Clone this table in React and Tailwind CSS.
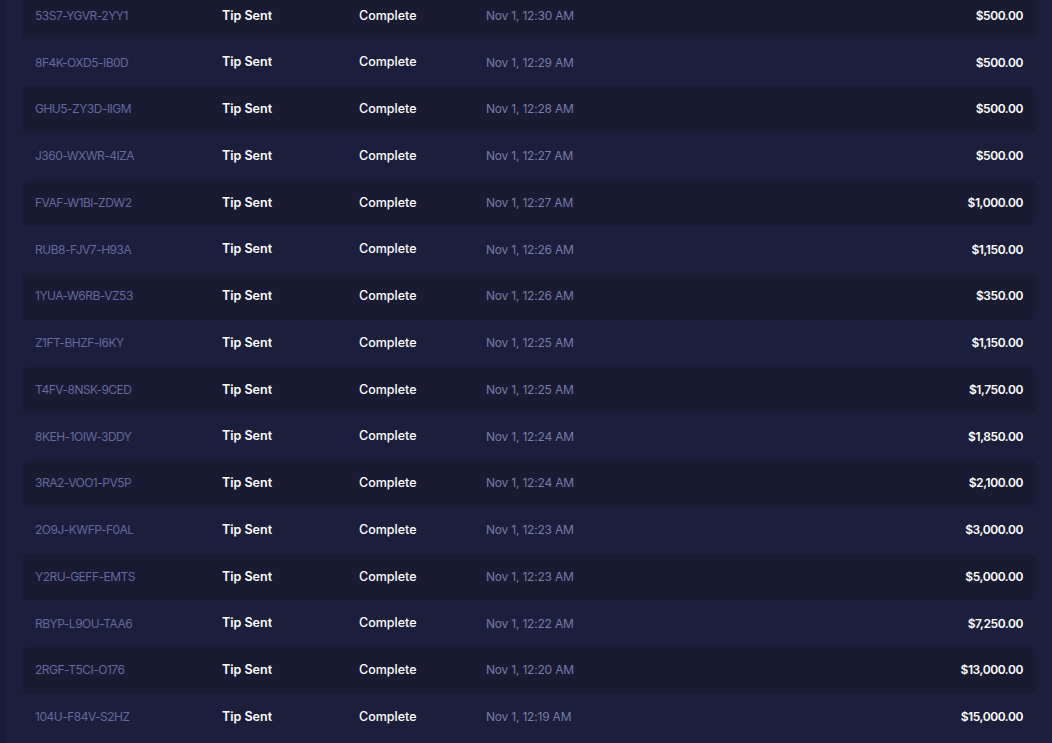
import React from "react";

const rows = [
  ["53S7-YGVR-2YY1", "Nov 1, 12:30 AM", "$500.00"],
  ["8F4K-OXD5-IB0D", "Nov 1, 12:29 AM", "$500.00"],
  ["GHU5-ZY3D-IIGM", "Nov 1, 12:28 AM", "$500.00"],
  ["J360-WXWR-4IZA", "Nov 1, 12:27 AM", "$500.00"],
  ["FVAF-W1BI-ZDW2", "Nov 1, 12:27 AM", "$1,000.00"],
  ["RUB8-FJV7-H93A", "Nov 1, 12:26 AM", "$1,150.00"],
  ["1YUA-W6RB-VZ53", "Nov 1, 12:26 AM", "$350.00"],
  ["Z1FT-BHZF-I6KY", "Nov 1, 12:25 AM", "$1,150.00"],
  ["T4FV-8NSK-9CED", "Nov 1, 12:25 AM", "$1,750.00"],
  ["8KEH-1OIW-3DDY", "Nov 1, 12:24 AM", "$1,850.00"],
  ["3RA2-VOO1-PV5P", "Nov 1, 12:24 AM", "$2,100.00"],
  ["2O9J-KWFP-F0AL", "Nov 1, 12:23 AM", "$3,000.00"],
  ["Y2RU-GEFF-EMTS", "Nov 1, 12:23 AM", "$5,000.00"],
  ["RBYP-L9OU-TAA6", "Nov 1, 12:22 AM", "$7,250.00"],
  ["2RGF-T5CI-O176", "Nov 1, 12:20 AM", "$13,000.00"],
  ["104U-F84V-S2HZ", "Nov 1, 12:19 AM", "$15,000.00"],
];

export default function App() {
  return (
    <div
      className="flex h-[743px] w-[1052px] overflow-hidden bg-[#1b1f3b]"
      style={{ fontFamily: "Inter, 'Noto Sans', sans-serif" }}
    >
      <div className="w-[7px] shrink-0 bg-[#171b34]" />
      <div className="flex-1 overflow-hidden pl-[15px] pr-[16px]">
        <div className="-mt-[7.5px] flex flex-col">
          {rows.map(([id, date, amt], i) => (
            <div
              key={id}
              className={
                "flex h-[46.75px] shrink-0 items-center rounded-md pl-[13px] pr-[13px] text-[12.5px] " +
                (i % 2 === 0 ? "bg-[#181b32]" : "bg-transparent")
              }
            >
              <div className="w-[187px] shrink-0 text-[12px] tracking-[-0.5px] text-[#646a9d]">{id}</div>
              <div className="w-[137px] shrink-0 font-semibold text-white">Tip Sent</div>
              <div className="w-[127px] shrink-0 font-medium text-white">Complete</div>
              <div className="w-[110px] shrink-0 text-[12px] tracking-[-0.2px] text-[#777da6]">{date}</div>
              <div className="flex-1 text-right text-[12px] tracking-[-0.4px] font-semibold text-white">{amt}</div>
            </div>
          ))}
        </div>
      </div>
    </div>
  );
}
